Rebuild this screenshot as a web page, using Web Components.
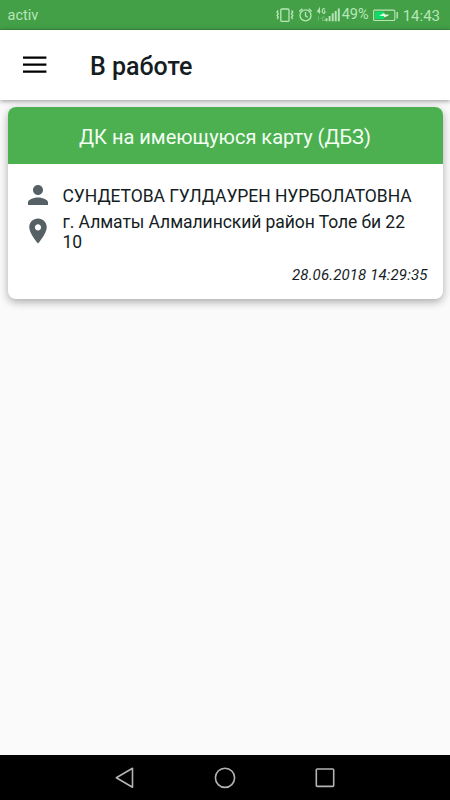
<!DOCTYPE html>
<html lang="ru">

<head>
    <meta charset="UTF-8">
    <meta name="viewport" content="width=device-width, initial-scale=1.0">
    <title>В работе</title>
    <style>
        body {
            margin: 0;
            font-family: Roboto, "Liberation Sans", sans-serif;
            color: #151d1f;
        }
    </style>
</head>

<body>

    <app-screen>
        <status-bar slot="top" carrier="activ" battery="49%" time="14:43"></status-bar>
        <app-toolbar slot="top">В работе</app-toolbar>
        <task-card>
            <span slot="title">ДК на имеющуюся карту (ДБЗ)</span>
            <info-row icon="person">СУНДЕТОВА ГУЛДАУРЕН НУРБОЛАТОВНА</info-row>
            <info-row icon="place">г. Алматы Алмалинский район Толе би 22 10</info-row>
            <span slot="date">28.06.2018 14:29:35</span>
        </task-card>
        <nav-bar slot="bottom"></nav-bar>
    </app-screen>

    <script>
        class AppScreen extends HTMLElement {
            constructor() {
                super();
                this.attachShadow({ mode: 'open' }).innerHTML = `
      <style>
        :host {
          display: flex;
          flex-direction: column;
          height: 800px;
          width: 450px;
          overflow: hidden;
          background: #fafafa;
        }
        main {
          flex: 1;
          padding: 7.4px 7.5px;
        }
      </style>
      <slot name="top"></slot>
      <main><slot></slot></main>
      <slot name="bottom"></slot>
    `;
            }
        }

        class StatusBar extends HTMLElement {
            constructor() {
                super();
                this.attachShadow({ mode: 'open' });
            }

            connectedCallback() {
                this.shadowRoot.innerHTML = `
      <style>
        :host {
          display: flex;
          align-items: center;
          box-sizing: border-box;
          height: 30px;
          padding: 1px 10px 0 7.5px;
          background: #43a047;
          border-bottom: 1px solid #3c9140;
          color: #b9e6b8;
          font-size: 14.5px;
          line-height: 20px;
        }
        .carrier {
          flex: 1;
          padding-top: 1px;
        }
        svg {
          display: block;
          flex: none;
        }
        .battery {
          margin: 0 4px 0 3px;
        }
        .time {
          padding-top: 1px;
          font-size: 15px;
        }
      </style>
      <span class="carrier">${this.getAttribute("carrier")}</span>
      <!-- vibrate, alarm, 4G signal -->
      <svg width="67" height="20" viewBox="275 5 67 20" fill="none" stroke="#b9e6b8" stroke-width="1.3">
        <rect x="280.8" y="9" width="8.2" height="12.4" rx="1"/>
        <path d="M278.3 10.5l-1.3 1.5 1.3 1.8-1.3 1.7 1.3 1.8-1.3 1.7M291.5 10.5l1.3 1.5-1.3 1.8 1.3 1.7-1.3 1.8 1.3 1.7"/>
        <circle cx="305.5" cy="15.4" r="5.5"/>
        <path d="M305.5 12v3.8l2.2 1.5M299.3 11.5l3-2.7M311.7 11.5l-3-2.7"/>
        <path stroke-width="1.1" d="M319.4 13.4V8.5L317.5 11.8H320.5M324.8 9.3C324 8.2 322.2 8.4 322.2 11S324.2 13.8 324.9 12.6V11H323.7"/>
        <path stroke-width="1" opacity=".4" d="M318.5 16.5v4M320.5 18h1M324.8 17H322.6v3.5h2.2v-1.5"/>
        <path stroke-width="1.9" d="M326.5 21.2v-3M329.6 21.2v-5.2M332.7 21.2v-8M335.7 21.2V11M338.8 21.2V8.6"/>
      </svg>
      <span>${this.getAttribute("battery")}</span>
      <svg class="battery" width="27" height="14" viewBox="0 0 27 14">
        <rect x="1.6" y="2.1" width="21.2" height="10.4" rx="1" fill="none" stroke="#b9e6b8" stroke-width="1.1"/>
        <rect x="3" y="3.5" width="9" height="7.6" fill="#10dc69"/>
        <path d="M7 7.8l5.2-2.7.6 1.4 4.7.2-5 2.8-.7-1.5z" fill="#e8ffe8"/>
        <path d="M25.2 4v6.6" stroke="#b9e6b8" stroke-width="1.4"/>
      </svg>
      <span class="time">${this.getAttribute("time")}</span>
    `;
            }
        }

        class AppToolbar extends HTMLElement {
            constructor() {
                super();
                this.attachShadow({ mode: 'open' }).innerHTML = `
      <style>
        :host {
          display: flex;
          align-items: center;
          gap: 42.6px;
          box-sizing: border-box;
          height: 70px;
          padding: 0 23.4px;
          background: #fff;
          box-shadow: 0 1px 5px rgba(0, 0, 0, 0.42);
          z-index: 1;
        }
        svg {
          display: block;
        }
        h1 {
          margin: 3px 0 0;
          font-size: 25px;
          font-weight: 500;
          line-height: 30px;
        }
      </style>
      <svg width="24" height="18" viewBox="0 0 24 18" stroke="#000" stroke-width="2.2">
        <path d="M0 1.7h23.4M0 8.7h23.4M0 15.7h23.4"/>
      </svg>
      <h1><slot></slot></h1>
    `;
            }
        }

        class TaskCard extends HTMLElement {
            constructor() {
                super();
                this.attachShadow({ mode: 'open' }).innerHTML = `
      <style>
        :host {
          display: flex;
          flex-direction: column;
          box-sizing: border-box;
          height: 191.6px;
          border-radius: 8px;
          overflow: hidden;
          background: #fff;
          box-shadow: 0 3px 9px rgba(0, 0, 0, 0.32);
        }
        header {
          height: 57px;
          background: #4caf50;
          color: #f4fff4;
          font-size: 20px;
          line-height: 60.5px;
          text-align: center;
        }
        .rows {
          flex: 1;
          padding: 15.5px 15px 0;
        }
        footer {
          padding: 0 15px 14px;
          font-size: 15px;
          font-style: italic;
          letter-spacing: 0.13px;
          line-height: 20px;
          text-align: right;
        }
      </style>
      <header><slot name="title"></slot></header>
      <div class="rows"><slot></slot></div>
      <footer><slot name="date"></slot></footer>
    `;
            }
        }

        const icons = {
            person: "M12 12c2.21 0 4-1.79 4-4s-1.79-4-4-4-4 1.79-4 4 1.79 4 4 4zm0 2c-2.67 0-8 1.34-8 4v2h16v-2c0-2.66-5.33-4-8-4z",
            place: "M12 2C8.13 2 5 5.13 5 9c0 5.25 7 13 7 13s7-7.75 7-13c0-3.87-3.13-7-7-7zm0 9.5c-1.38 0-2.5-1.12-2.5-2.5s1.12-2.5 2.5-2.5 2.5 1.12 2.5 2.5-1.12 2.5-2.5 2.5z"
        };

        class InfoRow extends HTMLElement {
            constructor() {
                super();
                this.attachShadow({ mode: 'open' });
            }

            connectedCallback() {
                this.shadowRoot.innerHTML = `
      <style>
        :host {
          display: flex;
          align-items: center;
          gap: 10px;
          height: 37px;
          font-size: 17.5px;
          letter-spacing: -0.06px;
          line-height: 20.5px;
        }
        :host(:first-of-type) {
          height: 30px;
          margin-bottom: 3px;
        }
        svg {
          flex: none;
        }
        div {
          padding-top: 2px;
        }
      </style>
      <svg width="30" height="30" viewBox="0 0 24 24" fill="#566166"><path d="${icons[this.getAttribute("icon")]}"/></svg>
      <div><slot></slot></div>
    `;
            }
        }

        class NavBar extends HTMLElement {
            constructor() {
                super();
                this.attachShadow({ mode: 'open' }).innerHTML = `
      <style>
        :host {
          display: flex;
          align-items: center;
          justify-content: center;
          gap: 76px;
          height: 45px;
          background: #000;
        }
      </style>
      <svg width="24" height="24" fill="none" stroke="#b4b4b4" stroke-width="1.6" stroke-linejoin="round"><path d="M19.5 2.3v19L3.3 11.8z"/></svg>
      <svg width="24" height="24" fill="none" stroke="#b4b4b4" stroke-width="1.6"><circle cx="12" cy="11.8" r="9.6"/></svg>
      <svg width="24" height="24" fill="none" stroke="#b4b4b4" stroke-width="1.6"><rect x="3.3" y="3" width="17.4" height="17.4" rx="1"/></svg>
    `;
            }
        }

        customElements.define("app-screen", AppScreen);
        customElements.define("status-bar", StatusBar);
        customElements.define("app-toolbar", AppToolbar);
        customElements.define("task-card", TaskCard);
        customElements.define("info-row", InfoRow);
        customElements.define("nav-bar", NavBar);
    </script>
</body>

</html>
